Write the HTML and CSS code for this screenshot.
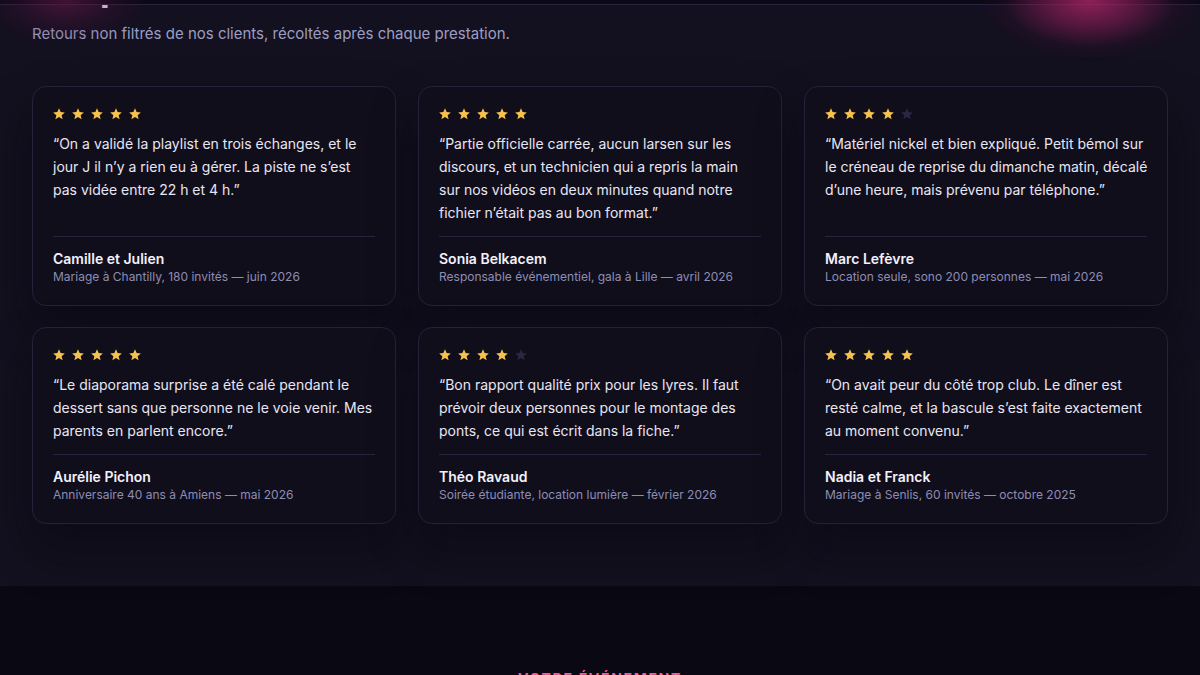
FILE: index.html
```html
<!DOCTYPE html>
<html lang="fr">
<head>
<meta charset="utf-8">
<title>Avis clients</title>
<link rel="stylesheet" href="styles.css">
</head>
<body>
<div class="topbar"></div>
<div class="glow glow-left"></div>
<div class="glow glow-right"></div>

<section class="reviews">
  <h2 class="reviews-title">Ce qu’ils en disent</h2>
  <p class="reviews-lead">Retours non filtrés de nos clients, récoltés après chaque prestation.</p>

  <div class="reviews-grid">
    <article class="card">
      <div class="stars" data-rating="5">
        <svg class="star on" viewBox="0 0 24 24"><path d="M12 2l2.81 6.63L22 9.24l-5.46 4.73L18.18 21 12 17.27 5.82 21l1.64-7.03L2 9.24l7.19-.61z"/></svg>
        <svg class="star on" viewBox="0 0 24 24"><path d="M12 2l2.81 6.63L22 9.24l-5.46 4.73L18.18 21 12 17.27 5.82 21l1.64-7.03L2 9.24l7.19-.61z"/></svg>
        <svg class="star on" viewBox="0 0 24 24"><path d="M12 2l2.81 6.63L22 9.24l-5.46 4.73L18.18 21 12 17.27 5.82 21l1.64-7.03L2 9.24l7.19-.61z"/></svg>
        <svg class="star on" viewBox="0 0 24 24"><path d="M12 2l2.81 6.63L22 9.24l-5.46 4.73L18.18 21 12 17.27 5.82 21l1.64-7.03L2 9.24l7.19-.61z"/></svg>
        <svg class="star on" viewBox="0 0 24 24"><path d="M12 2l2.81 6.63L22 9.24l-5.46 4.73L18.18 21 12 17.27 5.82 21l1.64-7.03L2 9.24l7.19-.61z"/></svg>
      </div>
      <p class="quote">“On a validé la playlist en trois échanges, et le jour J il n’y a rien eu à gérer. La piste ne s’est pas vidée entre 22 h et 4 h.”</p>
      <footer class="author">
        <strong class="name">Camille et Julien</strong>
        <span class="meta">Mariage à Chantilly, 180 invités — juin 2026</span>
      </footer>
    </article>

    <article class="card">
      <div class="stars" data-rating="5">
        <svg class="star on" viewBox="0 0 24 24"><path d="M12 2l2.81 6.63L22 9.24l-5.46 4.73L18.18 21 12 17.27 5.82 21l1.64-7.03L2 9.24l7.19-.61z"/></svg>
        <svg class="star on" viewBox="0 0 24 24"><path d="M12 2l2.81 6.63L22 9.24l-5.46 4.73L18.18 21 12 17.27 5.82 21l1.64-7.03L2 9.24l7.19-.61z"/></svg>
        <svg class="star on" viewBox="0 0 24 24"><path d="M12 2l2.81 6.63L22 9.24l-5.46 4.73L18.18 21 12 17.27 5.82 21l1.64-7.03L2 9.24l7.19-.61z"/></svg>
        <svg class="star on" viewBox="0 0 24 24"><path d="M12 2l2.81 6.63L22 9.24l-5.46 4.73L18.18 21 12 17.27 5.82 21l1.64-7.03L2 9.24l7.19-.61z"/></svg>
        <svg class="star on" viewBox="0 0 24 24"><path d="M12 2l2.81 6.63L22 9.24l-5.46 4.73L18.18 21 12 17.27 5.82 21l1.64-7.03L2 9.24l7.19-.61z"/></svg>
      </div>
      <p class="quote">“Partie officielle carrée, aucun larsen sur les discours, et un technicien qui a repris la main sur nos vidéos en deux minutes quand notre fichier n’était pas au bon format.”</p>
      <footer class="author">
        <strong class="name">Sonia Belkacem</strong>
        <span class="meta">Responsable événementiel, gala à Lille — avril 2026</span>
      </footer>
    </article>

    <article class="card">
      <div class="stars" data-rating="4">
        <svg class="star on" viewBox="0 0 24 24"><path d="M12 2l2.81 6.63L22 9.24l-5.46 4.73L18.18 21 12 17.27 5.82 21l1.64-7.03L2 9.24l7.19-.61z"/></svg>
        <svg class="star on" viewBox="0 0 24 24"><path d="M12 2l2.81 6.63L22 9.24l-5.46 4.73L18.18 21 12 17.27 5.82 21l1.64-7.03L2 9.24l7.19-.61z"/></svg>
        <svg class="star on" viewBox="0 0 24 24"><path d="M12 2l2.81 6.63L22 9.24l-5.46 4.73L18.18 21 12 17.27 5.82 21l1.64-7.03L2 9.24l7.19-.61z"/></svg>
        <svg class="star on" viewBox="0 0 24 24"><path d="M12 2l2.81 6.63L22 9.24l-5.46 4.73L18.18 21 12 17.27 5.82 21l1.64-7.03L2 9.24l7.19-.61z"/></svg>
        <svg class="star off" viewBox="0 0 24 24"><path d="M12 2l2.81 6.63L22 9.24l-5.46 4.73L18.18 21 12 17.27 5.82 21l1.64-7.03L2 9.24l7.19-.61z"/></svg>
      </div>
      <p class="quote">“Matériel nickel et bien expliqué. Petit bémol sur le créneau de reprise du dimanche matin, décalé d’une heure, mais prévenu par téléphone.”</p>
      <footer class="author">
        <strong class="name">Marc Lefèvre</strong>
        <span class="meta">Location seule, sono 200 personnes — mai 2026</span>
      </footer>
    </article>

    <article class="card">
      <div class="stars" data-rating="5">
        <svg class="star on" viewBox="0 0 24 24"><path d="M12 2l2.81 6.63L22 9.24l-5.46 4.73L18.18 21 12 17.27 5.82 21l1.64-7.03L2 9.24l7.19-.61z"/></svg>
        <svg class="star on" viewBox="0 0 24 24"><path d="M12 2l2.81 6.63L22 9.24l-5.46 4.73L18.18 21 12 17.27 5.82 21l1.64-7.03L2 9.24l7.19-.61z"/></svg>
        <svg class="star on" viewBox="0 0 24 24"><path d="M12 2l2.81 6.63L22 9.24l-5.46 4.73L18.18 21 12 17.27 5.82 21l1.64-7.03L2 9.24l7.19-.61z"/></svg>
        <svg class="star on" viewBox="0 0 24 24"><path d="M12 2l2.81 6.63L22 9.24l-5.46 4.73L18.18 21 12 17.27 5.82 21l1.64-7.03L2 9.24l7.19-.61z"/></svg>
        <svg class="star on" viewBox="0 0 24 24"><path d="M12 2l2.81 6.63L22 9.24l-5.46 4.73L18.18 21 12 17.27 5.82 21l1.64-7.03L2 9.24l7.19-.61z"/></svg>
      </div>
      <p class="quote">“Le diaporama surprise a été calé pendant le dessert sans que personne ne le voie venir. Mes parents en parlent encore.”</p>
      <footer class="author">
        <strong class="name">Aurélie Pichon</strong>
        <span class="meta">Anniversaire 40 ans à Amiens — mai 2026</span>
      </footer>
    </article>

    <article class="card">
      <div class="stars" data-rating="4">
        <svg class="star on" viewBox="0 0 24 24"><path d="M12 2l2.81 6.63L22 9.24l-5.46 4.73L18.18 21 12 17.27 5.82 21l1.64-7.03L2 9.24l7.19-.61z"/></svg>
        <svg class="star on" viewBox="0 0 24 24"><path d="M12 2l2.81 6.63L22 9.24l-5.46 4.73L18.18 21 12 17.27 5.82 21l1.64-7.03L2 9.24l7.19-.61z"/></svg>
        <svg class="star on" viewBox="0 0 24 24"><path d="M12 2l2.81 6.63L22 9.24l-5.46 4.73L18.18 21 12 17.27 5.82 21l1.64-7.03L2 9.24l7.19-.61z"/></svg>
        <svg class="star on" viewBox="0 0 24 24"><path d="M12 2l2.81 6.63L22 9.24l-5.46 4.73L18.18 21 12 17.27 5.82 21l1.64-7.03L2 9.24l7.19-.61z"/></svg>
        <svg class="star off" viewBox="0 0 24 24"><path d="M12 2l2.81 6.63L22 9.24l-5.46 4.73L18.18 21 12 17.27 5.82 21l1.64-7.03L2 9.24l7.19-.61z"/></svg>
      </div>
      <p class="quote">“Bon rapport qualité prix pour les lyres. Il faut prévoir deux personnes pour le montage des ponts, ce qui est écrit dans la fiche.”</p>
      <footer class="author">
        <strong class="name">Théo Ravaud</strong>
        <span class="meta">Soirée étudiante, location lumière — février 2026</span>
      </footer>
    </article>

    <article class="card">
      <div class="stars" data-rating="5">
        <svg class="star on" viewBox="0 0 24 24"><path d="M12 2l2.81 6.63L22 9.24l-5.46 4.73L18.18 21 12 17.27 5.82 21l1.64-7.03L2 9.24l7.19-.61z"/></svg>
        <svg class="star on" viewBox="0 0 24 24"><path d="M12 2l2.81 6.63L22 9.24l-5.46 4.73L18.18 21 12 17.27 5.82 21l1.64-7.03L2 9.24l7.19-.61z"/></svg>
        <svg class="star on" viewBox="0 0 24 24"><path d="M12 2l2.81 6.63L22 9.24l-5.46 4.73L18.18 21 12 17.27 5.82 21l1.64-7.03L2 9.24l7.19-.61z"/></svg>
        <svg class="star on" viewBox="0 0 24 24"><path d="M12 2l2.81 6.63L22 9.24l-5.46 4.73L18.18 21 12 17.27 5.82 21l1.64-7.03L2 9.24l7.19-.61z"/></svg>
        <svg class="star on" viewBox="0 0 24 24"><path d="M12 2l2.81 6.63L22 9.24l-5.46 4.73L18.18 21 12 17.27 5.82 21l1.64-7.03L2 9.24l7.19-.61z"/></svg>
      </div>
      <p class="quote">“On avait peur du côté trop club. Le dîner est resté calme, et la bascule s’est faite exactement au moment convenu.”</p>
      <footer class="author">
        <strong class="name">Nadia et Franck</strong>
        <span class="meta">Mariage à Senlis, 60 invités — octobre 2025</span>
      </footer>
    </article>
  </div>
</section>

<section class="event">
  <p class="eyebrow">Votre événement</p>
</section>
</body>
</html>
```

FILE: styles.css
```css
* {
  box-sizing: border-box;
}

html,
body {
  margin: 0;
  padding: 0;
  background: #0a0812;
  font-family: Inter, "Noto Sans", "Liberation Sans", sans-serif;
  color: #e7e5f1;
  overflow: hidden;
}

/* collapsed sticky header strip */
.topbar {
  position: fixed;
  top: 0;
  left: 0;
  right: 0;
  height: 5px;
  background: #0b0915;
  border-bottom: 1px solid #29233f;
  z-index: 5;
}

/* stage-light glows along the top edge */
.glow {
  position: fixed;
  pointer-events: none;
  z-index: 6;
  border-radius: 50%;
}

.glow-left {
  top: -45px;
  left: -20px;
  width: 170px;
  height: 90px;
  background: radial-gradient(ellipse at center, rgba(110, 26, 76, 0.55) 0%, rgba(80, 20, 64, 0.25) 40%, rgba(20, 14, 34, 0) 70%);
}

.glow-right {
  top: -60px;
  left: 980px;
  width: 220px;
  height: 120px;
  background: radial-gradient(ellipse at center, rgba(176, 38, 104, 0.8) 0%, rgba(140, 30, 88, 0.55) 30%, rgba(70, 20, 56, 0.2) 55%, rgba(20, 14, 34, 0) 72%);
}

.reviews {
  background: #13101f;
  padding: 0 32px 62px;
}

.reviews-title {
  margin: -30px 0 0;
  font-size: 36px;
  line-height: 36px;
  font-weight: 700;
  color: #f4f2fb;
  letter-spacing: -0.5px;
}

.reviews-lead {
  margin: 17px 0 0;
  font-size: 15px;
  line-height: 22px;
  color: #9c9ec3;
}

.reviews-grid {
  margin-top: 41px;
  display: grid;
  grid-template-columns: repeat(3, 1fr);
  column-gap: 22px;
  row-gap: 21px;
}

.card {
  display: flex;
  flex-direction: column;
  background: #110e1c;
  border: 1px solid #272038;
  border-radius: 14px;
  padding: 20px 18.5px 20px 20px;
  box-shadow: 0 24px 48px rgba(5, 3, 12, 0.35);
}

.stars {
  display: flex;
  gap: 5px;
  height: 14px;
  align-items: center;
  margin-left: -1px;
}

.star {
  width: 14px;
  height: 14px;
  display: block;
}

.star.on {
  fill: #f6c14c;
}

.star.off {
  fill: #2d2543;
}

.quote {
  flex: 1;
  margin: 11px 0 12px;
  font-size: 14px;
  line-height: 23px;
  color: #e8e6f2;
}

.author {
  border-top: 1px solid #2a2340;
  margin-right: 1.5px;
  padding-top: 13px;
  display: flex;
  flex-direction: column;
}

.name {
  font-size: 14px;
  line-height: 18px;
  font-weight: 600;
  color: #f3f1fb;
}

.meta {
  font-size: 12px;
  line-height: 17px;
  color: #8c8db3;
}

.event {
  padding: 83px 32px 40px;
  background: #0a0812;
  text-align: center;
}

.eyebrow {
  margin: 0;
  font-size: 14px;
  line-height: 20px;
  font-weight: 700;
  letter-spacing: 0.12em;
  text-transform: uppercase;
  color: #ff58a0;
}
```
